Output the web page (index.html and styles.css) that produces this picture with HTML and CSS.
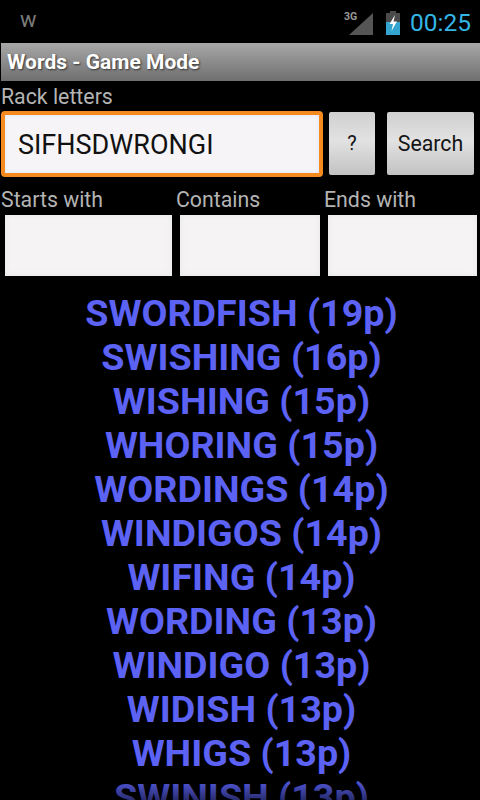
FILE: index.html
```html
<!DOCTYPE html>
<html lang="en">
<head>
<meta charset="utf-8">
<title>Words - Game Mode</title>
<link rel="stylesheet" href="styles.css">
</head>
<body>
<div class="screen">
  <div class="status">
    <span class="notif">w</span>
    <span class="sig">
      <svg width="24" height="22" viewBox="0 0 24 22"><path d="M24 0V22H0Z" fill="#555"/></svg>
      <span class="g3">3G</span>
    </span>
    <svg class="batt" width="16" height="24" viewBox="0 0 16 24"><rect x="5" y="0" width="6" height="3" fill="#4a4a4a"/><rect x="1" y="2" width="14" height="9" fill="#4a4a4a"/><rect x="1" y="11" width="14" height="13" fill="#33a5cf"/><path d="M10 4 4.500 13H8L6.500 20 12 10.500H8.500Z" fill="#fff"/></svg>
    <span class="clock">00:25</span>
  </div>
  <div class="title">Words - Game Mode</div>
  <div class="label rack-label">Rack letters</div>
  <div class="rack-row">
    <div class="rack-input">SIFHSDWRONGI</div>
    <div class="btn btn-q">?</div>
    <div class="btn btn-s">Search</div>
  </div>
  <div class="filters">
    <div class="filter f1"><div class="label">Starts with</div><div class="field"></div></div>
    <div class="filter f2"><div class="label">Contains</div><div class="field"></div></div>
    <div class="filter f3"><div class="label">Ends with</div><div class="field"></div></div>
  </div>
  <ul class="words">
    <li>SWORDFISH (19p)</li>
    <li>SWISHING (16p)</li>
    <li>WISHING (15p)</li>
    <li>WHORING (15p)</li>
    <li>WORDINGS (14p)</li>
    <li>WINDIGOS (14p)</li>
    <li>WIFING (14p)</li>
    <li>WORDING (13p)</li>
    <li>WINDIGO (13p)</li>
    <li>WIDISH (13p)</li>
    <li>WHIGS (13p)</li>
    <li>SWINISH (13p)</li>
  </ul>
  <div class="fade"></div>
</div>
</body>
</html>
```
FILE: styles.css
```css
* { box-sizing: border-box; }
html, body { margin: 0; padding: 0; background: #000; }
.screen {
  position: relative;
  width: 480px;
  height: 800px;
  overflow: hidden;
  background: #000;
  font-family: Roboto, sans-serif;
}
.status {
  height: 43px;
  display: flex;
  align-items: center;
  padding: 0 9px 0 20px;
  color: #8a8a8a;
}
.notif { font-size: 22px; line-height: 20px; margin-right: auto; padding-bottom: 4px; color: #7c7c7c; }
.sig { position: relative; width: 24px; height: 22px; margin-right: 12px; margin-top: 4px; }
.sig svg { display: block; }
.g3 { position: absolute; left: -5px; top: -2px; font-size: 10.500px; line-height: 12px; font-weight: 700; color: #999; }
.batt { margin-right: 9px; margin-top: 2px; }
.clock { color: #33b5e5; font-size: 24.500px; line-height: 28px; margin-top: 2px; }
.title {
  height: 38px;
  margin-left: 1px;
  padding-left: 6px;
  background: linear-gradient(#a8a8a8, #6f6f6f);
  color: #fff;
  font-size: 21px;
  font-weight: 700;
  line-height: 39px;
  text-shadow: 1px 1px 2px #333;
}
.label { color: #b4b4b4; font-size: 21.300px; line-height: 26px; padding-left: 1px; }
.rack-label { height: 29px; padding-top: 3px; }
.rack-row { display: flex; align-items: center; height: 67px; padding-left: 1px; }
.rack-input {
  width: 322px;
  height: 66px;
  border: 4px solid #f58a1f;
  border-radius: 4px;
  background: #f6f4f6;
  box-shadow: inset 0 0 4px #dfe6f5;
  color: #111;
  font-size: 27px;
  line-height: 60px;
  padding-left: 13px;
}
.btn {
  height: 63px;
  background: linear-gradient(#cfcfcf, #e2e2e2 45%, #c2c2c2);
  color: #151515;
  font-size: 21.300px;
  line-height: 63px;
  text-align: center;
  border-radius: 2px;
}
.btn-q { width: 46px; margin-left: 6px; font-size: 20px; }
.btn-s { width: 87px; margin-left: 12px; }
.filters { display: flex; margin-top: 8px; }
.filter { display: flex; flex-direction: column; }
.filter .label { height: 30px; line-height: 30px; }
.f1 { width: 175px; }
.f2 { width: 148px; }
.f3 { width: 154px; }
.field {
  height: 61px;
  margin-left: 5px;
  background: #f6f3f5;
  box-shadow: inset 0 0 6px #e6e6e6;
}
.f1 .field { width: 167px; }
.f2 .field { width: 140px; }
.f3 .field { width: 149px; }
.words {
  list-style: none;
  margin: 15px 0 0;
  padding: 0 0 0 3px;
  text-align: center;
  color: #5b62f4;
  font-size: 37.700px;
  font-weight: 700;
  line-height: 44px;
}
.fade {
  position: absolute;
  left: 0;
  right: 0;
  bottom: 0;
  height: 24px;
  background: linear-gradient(rgba(0,0,0,0), rgba(0,0,0,.55));
}
```
